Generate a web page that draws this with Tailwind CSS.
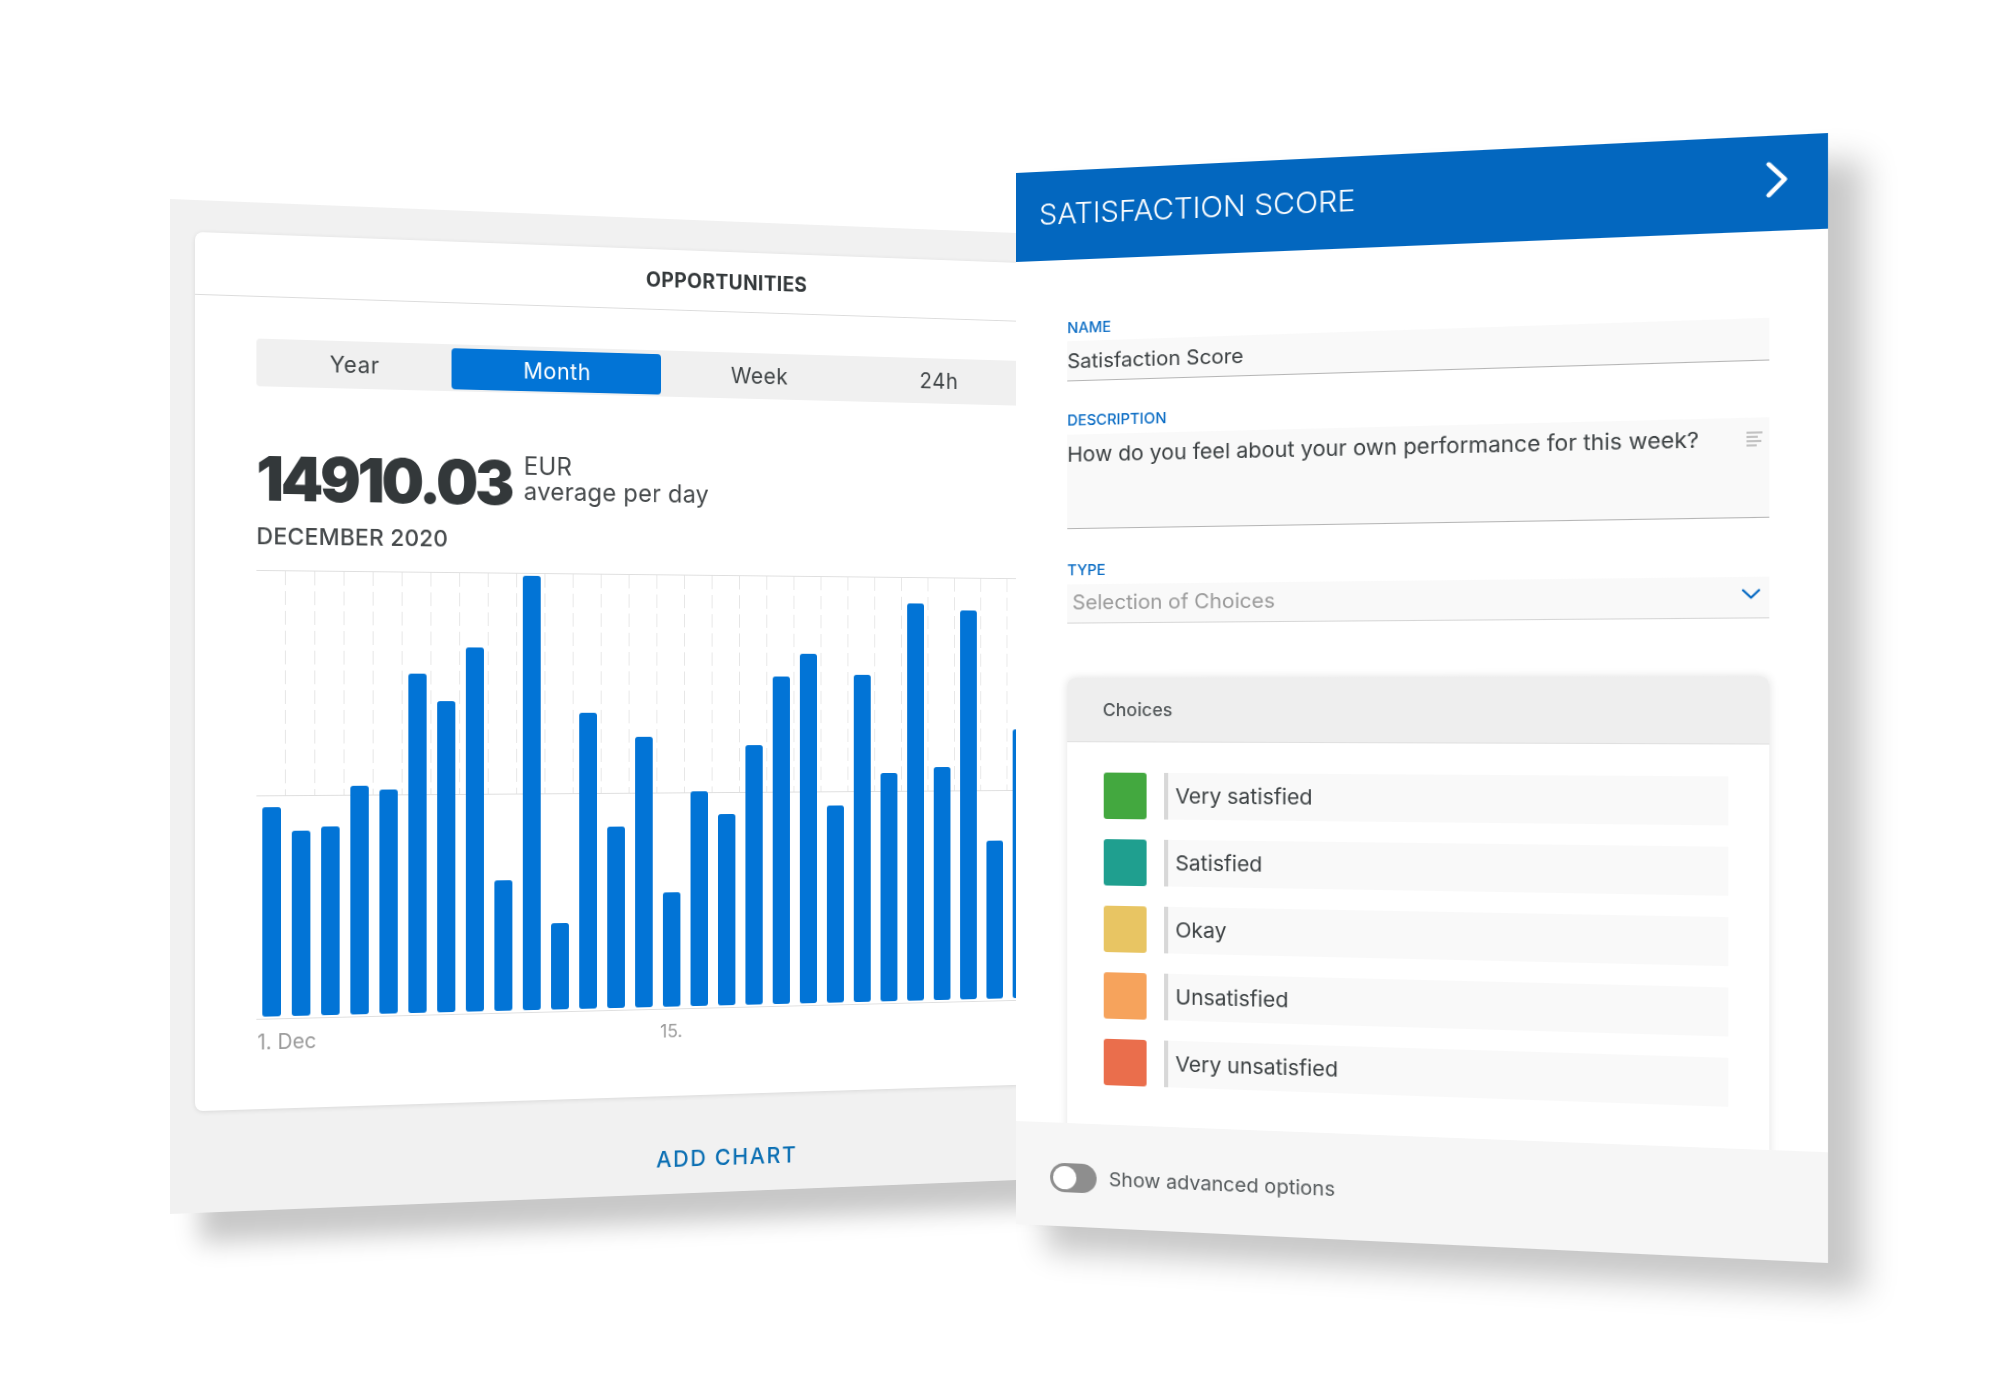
<!DOCTYPE html>
<html lang="en">
<head>
<meta charset="utf-8">
<title>Opportunities and Satisfaction Score</title>
<script src="https://cdn.jsdelivr.net/npm/@tailwindcss/browser@4"></script>
</head>
<body class="bg-white">
<div class="relative w-[2000px] h-[1396px] overflow-hidden bg-white font-['Inter','Liberation_Sans',sans-serif]">

  <!-- Left window -->
  <section class="absolute left-0 top-0 w-[1166px] h-[1015px] origin-top-left [transform:matrix3d(1.01322,0.05587,0,0.00007907,0,1,0,0,0,0,1,0,170,199,0,1)] bg-[#f1f1f1] shadow-[30px_30px_24px_rgba(0,0,0,0.22)] flex flex-col px-[25px] pt-[32px]">
    <div class="h-[881px] shrink-0 bg-white rounded-lg shadow-[0_1px_5px_rgba(0,0,0,0.1)] flex flex-col">
      <div class="h-[63px] shrink-0 border-b border-[#dcdcdc] flex items-center justify-center">
        <h2 class="text-[21px] leading-[24px] font-bold tracking-[0.02em] text-[#33383a] pt-[2px]">OPPORTUNITIES</h2>
      </div>
      <div class="px-[62px] pt-[42px]">
        <div class="h-[48px] bg-[#f0f0f0] rounded flex text-[23px] tracking-[0.025em] text-[#3f4446]">
          <div class="w-[201px] pt-[1px] flex items-center justify-center">Year</div>
          <div class="w-[223px] mt-[4px] mb-[2px] rounded-[4px] bg-[#0274d6] text-white flex items-center justify-center">Month</div>
          <div class="w-[215px] pt-[1px] flex items-center justify-center">Week</div>
          <div class="w-[186px] pt-[1px] flex items-center justify-center">24h</div>
        </div>
        <div class="mt-[62px] flex items-start gap-[15px]">
          <div class="w-[262px] text-[62px] leading-[62px] font-black tracking-[-0.053em] text-[#33383a] whitespace-nowrap">14910.03</div>
          <div class="text-[25.5px] leading-[26px] tracking-[0.01em] text-[#45494b]">
            <div>EUR</div>
            <div>average per day</div>
          </div>
        </div>
        <div class="mt-[14px] text-[23.5px] leading-[26px] font-medium tracking-[0.01em] text-[#45494b]">DECEMBER 2020</div>

        <div class="relative mt-[21px] h-[453px] border-y border-[#dfdfdf]">
          <div class="absolute left-0 right-0 top-0 h-1/2 [background-image:repeating-linear-gradient(to_bottom,transparent_0,transparent_14px,#fff_14px,#fff_20px),repeating-linear-gradient(to_right,transparent_0,transparent_29px,#e6e6e6_29px,#e6e6e6_30px)]"></div>
          <div class="absolute left-0 right-0 top-1/2 border-t border-[#dedede]"></div>
          <div class="relative h-full flex items-end gap-[10.5px] pl-[5.5px] pb-[2px]">
            <div class="w-[19.5px] h-[211px] rounded-[3px] bg-[#0274d6]"></div>
            <div class="w-[19.5px] h-[187px] rounded-[3px] bg-[#0274d6]"></div>
            <div class="w-[19.5px] h-[191px] rounded-[3px] bg-[#0274d6]"></div>
            <div class="w-[19.5px] h-[232px] rounded-[3px] bg-[#0274d6]"></div>
            <div class="w-[19.5px] h-[228px] rounded-[3px] bg-[#0274d6]"></div>
            <div class="w-[19.5px] h-[346px] rounded-[3px] bg-[#0274d6]"></div>
            <div class="w-[19.5px] h-[318px] rounded-[3px] bg-[#0274d6]"></div>
            <div class="w-[19.5px] h-[373px] rounded-[3px] bg-[#0274d6]"></div>
            <div class="w-[19.5px] h-[134px] rounded-[3px] bg-[#0274d6]"></div>
            <div class="w-[19.5px] h-[447px] rounded-[3px] bg-[#0274d6]"></div>
            <div class="w-[19.5px] h-[89px] rounded-[3px] bg-[#0274d6]"></div>
            <div class="w-[19.5px] h-[306px] rounded-[3px] bg-[#0274d6]"></div>
            <div class="w-[19.5px] h-[188px] rounded-[3px] bg-[#0274d6]"></div>
            <div class="w-[19.5px] h-[281px] rounded-[3px] bg-[#0274d6]"></div>
            <div class="w-[19.5px] h-[119px] rounded-[3px] bg-[#0274d6]"></div>
            <div class="w-[19.5px] h-[224px] rounded-[3px] bg-[#0274d6]"></div>
            <div class="w-[19.5px] h-[200px] rounded-[3px] bg-[#0274d6]"></div>
            <div class="w-[19.5px] h-[272px] rounded-[3px] bg-[#0274d6]"></div>
            <div class="w-[19.5px] h-[344px] rounded-[3px] bg-[#0274d6]"></div>
            <div class="w-[19.5px] h-[368px] rounded-[3px] bg-[#0274d6]"></div>
            <div class="w-[19.5px] h-[208px] rounded-[3px] bg-[#0274d6]"></div>
            <div class="w-[19.5px] h-[346px] rounded-[3px] bg-[#0274d6]"></div>
            <div class="w-[19.5px] h-[242px] rounded-[3px] bg-[#0274d6]"></div>
            <div class="w-[19.5px] h-[422px] rounded-[3px] bg-[#0274d6]"></div>
            <div class="w-[19.5px] h-[248px] rounded-[3px] bg-[#0274d6]"></div>
            <div class="w-[19.5px] h-[415px] rounded-[3px] bg-[#0274d6]"></div>
            <div class="w-[19.5px] h-[169px] rounded-[3px] bg-[#0274d6]"></div>
            <div class="w-[19.5px] h-[288px] rounded-[3px] bg-[#0274d6]"></div>
          </div>
        </div>
        <div class="mt-[11px] flex text-[21px] leading-[24px] text-[#9a9a9a]">
          <div class="w-[423px] pl-[1px]">1. Dec</div>
          <div class="text-[19px]">15.</div>
        </div>
      </div>
    </div>
    <div class="flex-1 flex justify-center pt-[52px]">
      <button class="text-[23.5px] leading-[28px] h-[28px] font-medium tracking-[0.075em] text-[#0b6fb3]">ADD CHART</button>
    </div>
  </section>

  <!-- Right window -->
  <section class="absolute left-0 top-0 w-[755px] h-[1051px] origin-top-left [transform:matrix3d(0.90623,-0.0653,0,-0.0000926,0,1,0,0,0,0,1,0,1016,173,0,1)] bg-white shadow-[30px_26px_28px_rgba(0,0,0,0.22)] flex flex-col">
    <header class="h-[89px] shrink-0 bg-[#0367bf] pl-[23px] pr-[35px] pb-[3px] flex items-center justify-between">
      <h1 class="text-[28.7px] leading-[36px] font-light text-white whitespace-nowrap">SATISFACTION SCORE</h1>
      <svg class="w-[19px] h-[34px] -mt-[4px]" viewBox="0 0 19 34" fill="none" stroke="#fff" stroke-width="4" stroke-linecap="round" stroke-linejoin="round"><path d="M2.5 2.5l14 14.5-14 14.5"/></svg>
    </header>

    <div class="flex-1 min-h-0 overflow-hidden px-[51px] pt-[60px]">
      <label class="block text-[14.5px] leading-[16px] font-medium text-[#0a6cc4]">NAME</label>
      <div class="mt-[5px] h-[40px] bg-[#f9f9f9] border-b border-[#b5b5b5] pt-[8px] text-[20px] leading-[24px] text-[#3a3f41]">Satisfaction Score</div>

      <label class="block mt-[31px] text-[14.5px] leading-[16px] font-medium text-[#0a6cc4]">DESCRIPTION</label>
      <div class="relative mt-[6px] h-[94px] bg-[#f9f9f9] border-b border-[#b5b5b5] pt-[8px] text-[20.7px] leading-[24px] text-[#3a3f41]">
        How do you feel about your own performance for this week?
        <svg class="absolute right-[6px] top-[12px] w-[14px] h-[15px]" viewBox="0 0 14 15" fill="none" stroke="#b0b0b0" stroke-width="1.4"><path d="M0 2h14M0 6h10M0 10h13M0 14h9"/></svg>
      </div>

      <label class="block mt-[33px] text-[14.5px] leading-[16px] font-medium text-[#0a6cc4]">TYPE</label>
      <div class="relative mt-[6px] h-[39px] bg-[#f9f9f9] border-b border-[#d6d6d6] pl-[5px] pb-[2px] flex items-center text-[20.2px] leading-[24px] text-[#9a9a9a]">
        Selection of Choices
        <svg class="absolute right-[8px] top-[11px] w-[16px] h-[10px]" viewBox="0 0 16 10" fill="none" stroke="#0a6cc4" stroke-width="2" stroke-linecap="round" stroke-linejoin="round"><path d="M1 1.5l7 7 7-7"/></svg>
      </div>

      <div class="mt-[54px] rounded-t-lg bg-white shadow-[0_0_8px_rgba(0,0,0,0.12)] h-[600px]">
        <div class="h-[64px] rounded-t-lg bg-[#eeeeee] border-b border-[#e0e0e0] pl-[35px] flex items-center text-[17.5px] leading-[24px] font-medium text-[#555a5c]">Choices</div>
        <div class="pt-[30px] px-[36px] flex flex-col gap-[20px]">
          <div class="flex h-[46px] gap-[17px]">
            <div class="w-[42px] rounded-[3px] bg-[#43a83f]"></div>
            <div class="flex-1 bg-[#f9f9f9] border-l-4 border-[#d8d8d8] pl-[7px] pt-[1px] flex items-center text-[20.4px] text-[#3a3f41]">Very satisfied</div>
          </div>
          <div class="flex h-[46px] gap-[17px]">
            <div class="w-[42px] rounded-[3px] bg-[#1f9f8f]"></div>
            <div class="flex-1 bg-[#f9f9f9] border-l-4 border-[#d8d8d8] pl-[7px] pt-[1px] flex items-center text-[20.4px] text-[#3a3f41]">Satisfied</div>
          </div>
          <div class="flex h-[46px] gap-[17px]">
            <div class="w-[42px] rounded-[3px] bg-[#e8c563]"></div>
            <div class="flex-1 bg-[#f9f9f9] border-l-4 border-[#d8d8d8] pl-[7px] pt-[1px] flex items-center text-[20.4px] text-[#3a3f41]">Okay</div>
          </div>
          <div class="flex h-[46px] gap-[17px]">
            <div class="w-[42px] rounded-[3px] bg-[#f6a35c]"></div>
            <div class="flex-1 bg-[#f9f9f9] border-l-4 border-[#d8d8d8] pl-[7px] pt-[1px] flex items-center text-[20.4px] text-[#3a3f41]">Unsatisfied</div>
          </div>
          <div class="flex h-[46px] gap-[17px]">
            <div class="w-[42px] rounded-[3px] bg-[#ea6e4c]"></div>
            <div class="flex-1 bg-[#f9f9f9] border-l-4 border-[#d8d8d8] pl-[7px] pt-[1px] flex items-center text-[20.4px] text-[#3a3f41]">Very unsatisfied</div>
          </div>
        </div>
      </div>
    </div>

    <footer class="relative h-[103px] shrink-0 bg-[#f6f6f6] pl-[34px] pt-[40px] flex items-start gap-[12px]">
      <div class="w-[46px] h-[29px] rounded-full bg-[#8e8e8e] p-[3px]">
        <div class="w-[23px] h-[23px] rounded-full bg-white"></div>
      </div>
      <span class="text-[19.2px] leading-[29px] text-[#555a5c]">Show advanced options</span>
    </footer>
  </section>
</div>
</body>
</html>
